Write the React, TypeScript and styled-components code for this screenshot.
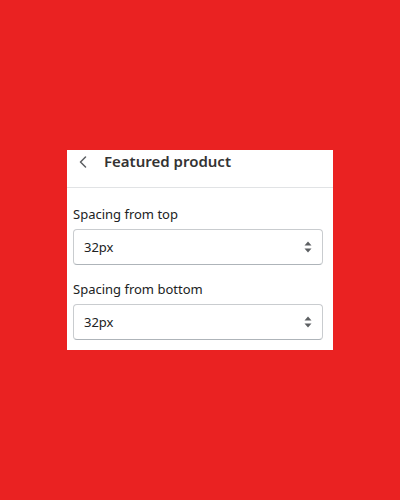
import React from "react";
import styled, { createGlobalStyle } from "styled-components";

const Global = createGlobalStyle`
  html, body { margin: 0; padding: 0; }
  body {
    background: #ea2222;
    font-family: "Noto Sans", "Open Sans", Arial, sans-serif;
    width: 400px;
    height: 500px;
    overflow: hidden;
  }
`;

const Stage = styled.div`
  width: 400px;
  height: 500px;
  display: flex;
  justify-content: center;
  align-items: flex-start;
  padding-top: 150px;
  box-sizing: border-box;
`;

const Panel = styled.div`
  width: 266px;
  height: 200px;
  background: #ffffff;
  display: flex;
  flex-direction: column;
  box-sizing: border-box;
`;

const Header = styled.div`
  height: 38px;
  display: flex;
  align-items: flex-start;
  gap: 17px;
  padding: 1px 0 0 12px;
  border-bottom: 1px solid #e1e3e5;
  box-sizing: border-box;
`;

const BackButton = styled.button`
  border: none;
  background: none;
  padding: 0;
  margin-top: 5px;
  width: 8px;
  height: 12px;
  display: flex;
  align-items: center;
  justify-content: center;
  color: #5c5f62;
  cursor: pointer;
`;

const Title = styled.h2`
  margin: 0;
  font-size: 15px;
  font-weight: 600;
  color: #333333;
  line-height: 20px;
`;

const Body = styled.div`
  display: flex;
  flex-direction: column;
  gap: 15px;
  padding: 17px 10px 0 6px;
`;

const Field = styled.div`
  display: flex;
  flex-direction: column;
  gap: 6px;
`;

const Label = styled.label`
  font-size: 13px;
  line-height: 18px;
  color: #202223;
`;

const SelectBox = styled.div`
  position: relative;
  height: 36px;
  border: 1px solid #c9cccf;
  border-bottom-color: #aeb4b9;
  border-radius: 4px;
  display: flex;
  align-items: center;
  padding: 0 10px;
  box-sizing: border-box;
  font-size: 13px;
  color: #202223;
  background: #fff;
`;

const Value = styled.span`
  flex: 1;
`;

const Chevron = () => (
  <svg width="8" height="12" viewBox="0 0 8 12" fill="none">
    <path d="M6.5 1 L1.5 6 L6.5 11" stroke="currentColor" strokeWidth="1.5" strokeLinecap="round" strokeLinejoin="round" />
  </svg>
);

const Arrows = () => (
  <svg width="8" height="12" viewBox="0 0 8 12">
    <path d="M4 0.5 L7.5 4.5 L0.5 4.5 Z" fill="#5c5f62" />
    <path d="M4 11.5 L7.5 7.5 L0.5 7.5 Z" fill="#5c5f62" />
  </svg>
);

const Select = ({ value }: { value: string }) => (
  <SelectBox>
    <Value>{value}</Value>
    <Arrows />
  </SelectBox>
);

export default function App() {
  return (
    <>
      <Global />
      <Stage>
        <Panel>
          <Header>
            <BackButton aria-label="Back">
              <Chevron />
            </BackButton>
            <Title>Featured product</Title>
          </Header>
          <Body>
            <Field>
              <Label>Spacing from top</Label>
              <Select value="32px" />
            </Field>
            <Field>
              <Label>Spacing from bottom</Label>
              <Select value="32px" />
            </Field>
          </Body>
        </Panel>
      </Stage>
    </>
  );
}
